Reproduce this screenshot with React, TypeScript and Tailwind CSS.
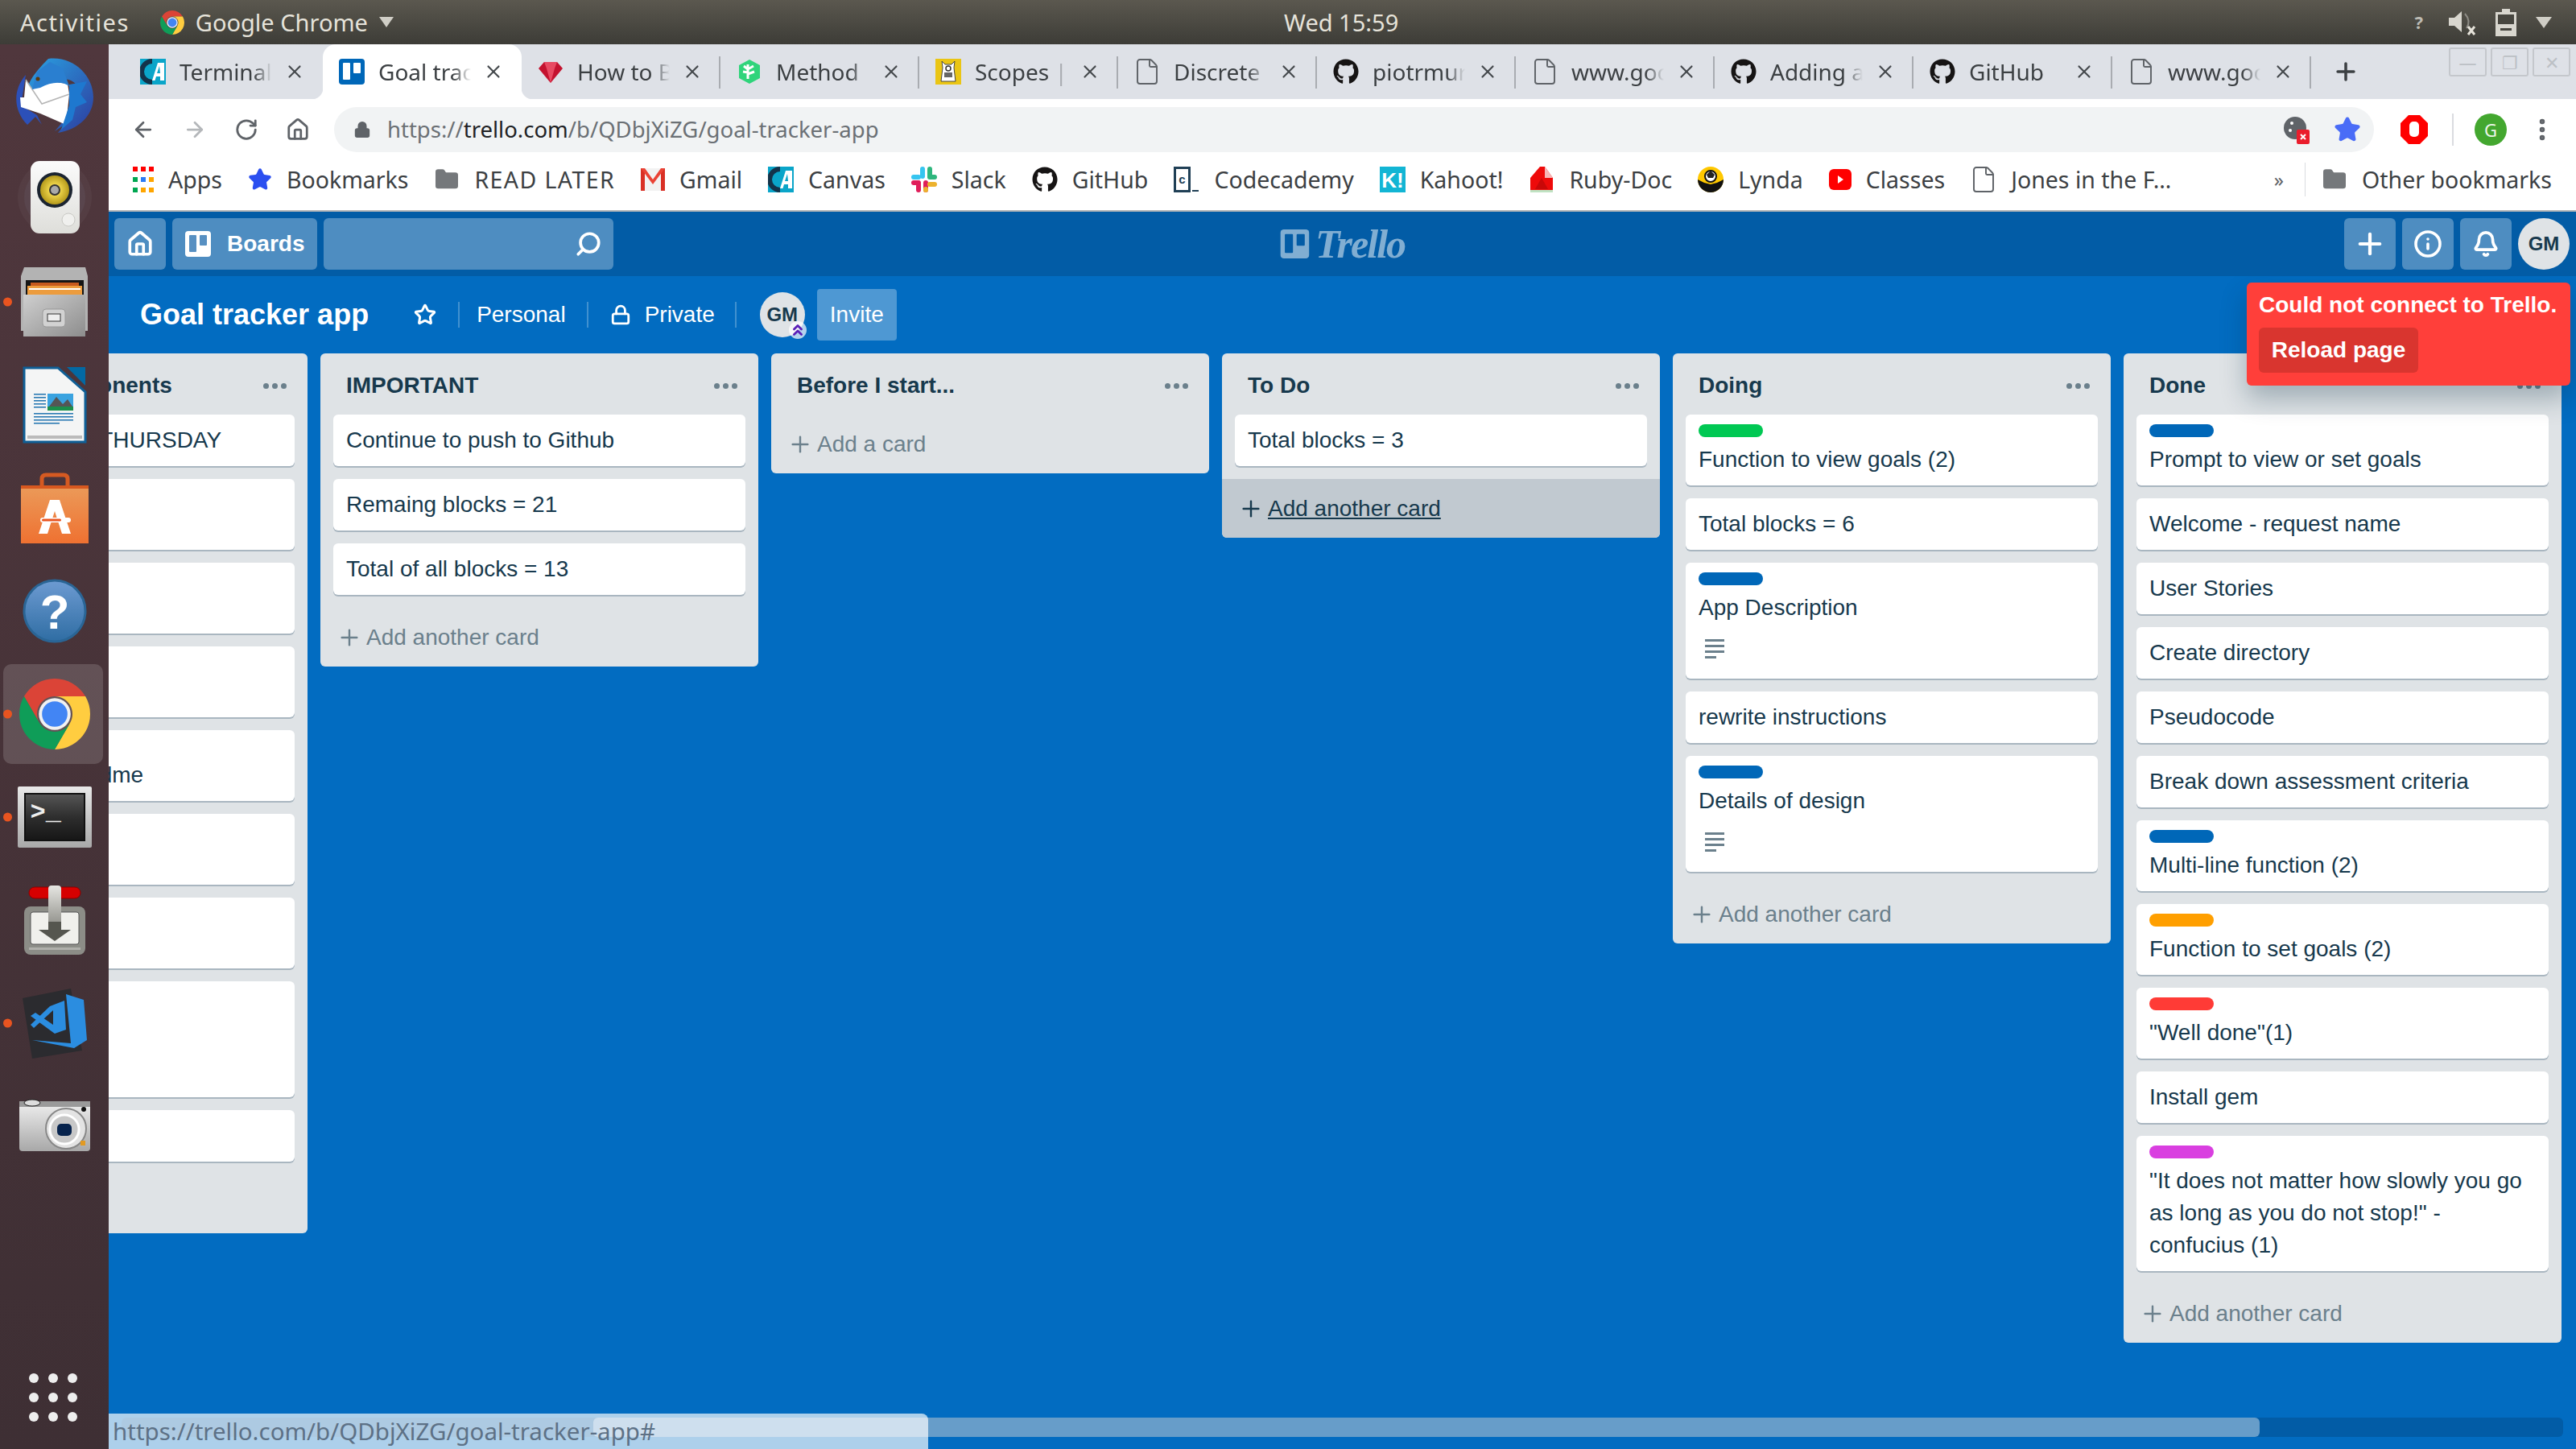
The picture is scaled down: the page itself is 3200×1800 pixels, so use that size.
import React from "react";
import { FaGithub } from "react-icons/fa";
import { Plus, Info, Bell, Search, Home, ArrowLeft, ArrowRight, RotateCw, Lock, Star, X, MoreVertical, ChevronsUp, Folder, File } from "lucide-react";

const BG = "#dee1e7";

function TrelloMark({ size = 32, bg = "#0067b8", fg = "#fff" }: { size?: number; bg?: string; fg?: string }) {
  return (
    <svg width={size} height={size} viewBox="0 0 32 32">
      <rect width="32" height="32" rx="4" fill={bg} />
      <rect x="5" y="5" width="9" height="21" rx="1" fill={fg} />
      <rect x="18" y="5" width="9" height="13" rx="1" fill={fg} />
    </svg>
  );
}

function ChromeLogo({ size = 44 }: { size?: number }) {
  return (
    <svg width={size} height={size} viewBox="4 4 40 40">
      <path fill="#db4437" d="M6.68 14A20 20 0 0 1 41.32 14H24A10 10 0 0 0 15.34 29Z" />
      <path fill="#ffcd40" d="M41.32 14A20 20 0 0 1 24 44L32.66 29A10 10 0 0 0 24 14Z" />
      <path fill="#0f9d58" d="M24 44A20 20 0 0 1 6.68 14L15.34 29A10 10 0 0 0 32.66 29Z" />
      <circle cx="24" cy="24" r="9" fill="#f1f1f1" />
      <circle cx="24" cy="24" r="7.2" fill="#4285f4" />
    </svg>
  );
}

function CanvasIcon() {
  return (
    <svg width="32" height="32" viewBox="0 0 32 32">
      <rect width="32" height="32" fill="#0aa5c9" />
      <path d="M15 3A13 13 0 1 0 15 29" fill="none" stroke="#13334a" strokeWidth="6" />
      <path d="M22 5L15 27H18.5L20 22H25V27H30V5ZM21 18L24 9L25 18Z" fill="#fff" />
    </svg>
  );
}

function GemIcon() {
  return (
    <svg width="32" height="32" viewBox="0 0 32 32">
      <path d="M8 4H24L31 12L16 30L1 12Z" fill="#c4122f" />
      <path d="M8 4L11 12H21L24 4L16 4ZM11 12L16 30L21 12Z" fill="#e84a62" />
    </svg>
  );
}

function MethodIcon() {
  return (
    <svg width="32" height="32" viewBox="0 0 32 32">
      <path d="M16 1L29 8V24L16 31L3 24V8Z" fill="#2fd47b" />
      <path d="M14 7V25M14 13L9 9M14 17L8 16M14 13L21 9M14 19L22 16" stroke="#fff" strokeWidth="3" fill="none" />
    </svg>
  );
}

function ScopesIcon() {
  return (
    <svg width="32" height="32" viewBox="0 0 32 32">
      <rect width="32" height="32" fill="#eac514" />
      <path d="M9 11L8 3L12 7H20L24 3L23 11L25 28H7Z" fill="#fff" stroke="#444" strokeWidth="1" />
      <circle cx="16" cy="12" r="3" fill="#fff" stroke="#333" strokeWidth="1.5" />
      <rect x="11" y="17" width="10" height="6" fill="#666" />
    </svg>
  );
}

function SlackIcon() {
  return (
    <svg width="32" height="32" viewBox="0 0 32 32">
      <rect x="11" y="0" width="6" height="15" rx="3" fill="#36c5f0" />
      <rect x="0" y="10" width="12" height="6" rx="3" fill="#36c5f0" />
      <rect x="20" y="0" width="6" height="15" rx="3" fill="#2eb67d" />
      <rect x="20" y="10" width="12" height="6" rx="3" fill="#2eb67d" />
      <rect x="6" y="17" width="6" height="15" rx="3" fill="#e01e5a" />
      <rect x="0" y="17" width="11" height="6" rx="3" fill="#e01e5a" />
      <rect x="15" y="17" width="6" height="15" rx="3" fill="#e01e5a" />
      <rect x="20" y="19" width="12" height="6" rx="3" fill="#ecb22e" />
      <rect x="15" y="25" width="6" height="7" rx="3" fill="#ecb22e" />
    </svg>
  );
}

function CodecademyIcon() {
  return (
    <svg width="32" height="32" viewBox="0 0 32 32">
      <rect x="1.5" y="1.5" width="18" height="29" fill="#fff" stroke="#204056" strokeWidth="3" />
      <text x="10.5" y="21" fontSize="15" fontWeight="700" fill="#204056" textAnchor="middle" fontFamily="Liberation Sans">c</text>
      <rect x="23" y="29" width="8" height="2" fill="#204056" />
    </svg>
  );
}

function KahootIcon() {
  return (
    <svg width="32" height="32" viewBox="0 0 32 32">
      <rect width="32" height="32" fill="#12b5d4" />
      <text x="16" y="26" fontSize="26" fontWeight="700" fill="#fff" textAnchor="middle" fontFamily="Liberation Sans">K!</text>
    </svg>
  );
}

function RubyDocIcon() {
  return (
    <svg width="32" height="32" viewBox="0 0 32 32">
      <path d="M14 0H20L30 14V32H2V14Z" fill="#ee0a0a" />
      <path d="M20 0L30 14H20Z" fill="#f7b7b7" />
      <path d="M2 29H30V32H2Z" fill="#bfe3c3" />
      <path d="M16 14L24 28H8Z" fill="#c90808" />
    </svg>
  );
}

function LyndaIcon() {
  return (
    <svg width="32" height="32" viewBox="0 0 32 32">
      <circle cx="16" cy="16" r="16" fill="#ffc800" />
      <path d="M0 16A16 16 0 0 0 32 16L24 20L16 22L8 20Z" fill="#111" />
      <circle cx="16" cy="12" r="7" fill="#fff" stroke="#111" strokeWidth="2" />
      <path d="M11 10L16 5L21 10L19 14H13Z" fill="#222" />
    </svg>
  );
}

function YouTubeIcon() {
  return (
    <svg width="28" height="32" viewBox="0 0 28 32" className="shrink-0">
      <rect x="0" y="3" width="28" height="26" rx="6" fill="#f00" />
      <path d="M11 11L18 16L11 21Z" fill="#fff" />
    </svg>
  );
}

function GmailIcon() {
  return (
    <svg width="30" height="28" viewBox="0 0 30 28" className="shrink-0">
      <rect width="30" height="28" fill="#f2f2f2" />
      <path d="M0 0H5V28H0ZM25 0H30V28H25Z" fill="#d93025" />
      <path d="M0 0H5L15 14L25 0H30L15 20Z" fill="#ea4335" />
    </svg>
  );
}

function AppsGrid() {
  const colors = ["#ff0000", "#ff0000", "#ff0000", "#00a651", "#2a7bf6", "#ffa500", "#00a651", "#ffa500", "#ffa500"];
  return (
    <div className="grid w-[26px] shrink-0 grid-cols-3 gap-x-[4px] gap-y-[7px]">
      {colors.map((c, i) => (
        <div key={i} className="h-[6px] w-[6px]" style={{ backgroundColor: c }} />
      ))}
    </div>
  );
}

function GreyFolder() {
  return <Folder size={32} fill="#75787b" stroke="#75787b" strokeWidth={1} className="shrink-0" />;
}

function PageIcon() {
  return <File size={36} strokeWidth={1.3} color="#5f6368" className="-mx-[2px] shrink-0" />;
}

function Octo({ size = 32 }: { size?: number }) {
  return <FaGithub size={size} color="#161414" className="shrink-0" />;
}

// Dock icons ------------------------------------------------------------
function Thunderbird() {
  return (
    <svg width="96" height="96" viewBox="0 0 96 96">
      <defs>
        <linearGradient id="tb" x1="0" y1="0" x2="1" y2="1">
          <stop offset="0" stopColor="#2aa3e3" />
          <stop offset="1" stopColor="#2d3b9e" />
        </linearGradient>
      </defs>
      <path d="M40 2C70 -2 96 22 96 50C96 72 78 90 52 94L60 84L48 92L70 66L78 40C74 28 60 24 48 30L30 38L14 42C14 30 28 14 40 2Z" fill="url(#tb)" />
      <path d="M12 22C-4 40 -4 66 14 84L24 74L32 84L26 72L6 60Z" fill="#2c50b8" />
      <path d="M12 28L20 40L42 30L64 33L66 46L62 84L30 70L6 62L5 50L10 50Z" fill="#fff" />
      <path d="M12 28L32 58L66 46" fill="none" stroke="#b4b4b4" strokeWidth="1.5" />
      <path d="M20 40L26 18L42 6L58 14L66 36C58 30 44 30 30 38Z" fill="#2a7fd0" />
      <circle cx="27" cy="27" r="2.5" fill="#5a3b10" />
      <path d="M66 34L88 30L80 46L88 56L74 62L70 78L56 90L66 60Z" fill="#1e78cf" />
    </svg>
  );
}

function Speaker() {
  return (
    <svg width="96" height="96" viewBox="0 0 96 96">
      <defs>
        <linearGradient id="spk" x1="0" y1="0" x2="0" y2="1">
          <stop offset="0" stopColor="#fbfbfb" />
          <stop offset="1" stopColor="#dededa" />
        </linearGradient>
        <radialGradient id="cone" cx="0.5" cy="0.5" r="0.5">
          <stop offset="0.3" stopColor="#f5dc50" />
          <stop offset="1" stopColor="#b59a1c" />
        </radialGradient>
      </defs>
      <circle cx="48" cy="46" r="46" fill="#fff" opacity="0.04" />
      <circle cx="48" cy="46" r="38" fill="#a8c8e8" opacity="0.06" />
      <rect x="18" y="1" width="61" height="90" rx="11" fill="url(#spk)" />
      <circle cx="48" cy="37" r="22" fill="#1b2430" />
      <circle cx="48" cy="37" r="18" fill="url(#cone)" />
      <circle cx="48" cy="37" r="7" fill="#333" />
      <circle cx="48" cy="37" r="5" fill="#aaa" />
      <circle cx="65" cy="74" r="8" fill="#f0f0ee" stroke="#c9c9c5" strokeWidth="1" />
    </svg>
  );
}

function Cabinet() {
  return (
    <svg width="88" height="88" viewBox="0 0 88 88">
      <defs>
        <linearGradient id="cab" x1="0" y1="0" x2="1" y2="1">
          <stop offset="0" stopColor="#cfcfcf" />
          <stop offset="1" stopColor="#8d8d8d" />
        </linearGradient>
      </defs>
      <path d="M6 1H82L85 12V80H2V12Z" fill="#b3b3b3" />
      <rect x="8" y="17" width="72" height="20" fill="#151515" />
      <rect x="14" y="20" width="60" height="8" fill="#c65a1e" />
      <rect x="10" y="24" width="68" height="12" fill="#ec9c3e" />
      <rect x="12" y="27" width="64" height="2" fill="#fff" />
      <rect x="5" y="35" width="77" height="52" fill="url(#cab)" />
      <rect x="29" y="53" width="28" height="22" rx="4" fill="#d2d2d2" stroke="#999" />
      <rect x="35" y="59" width="16" height="9" fill="#eee" stroke="#333" />
    </svg>
  );
}

function Writer() {
  return (
    <svg width="80" height="96" viewBox="0 0 80 96">
      <path d="M2 2H44L78 32V94H2Z" fill="#f4f5f5" stroke="#0f5f96" strokeWidth="3" />
      <path d="M55 1H78V24Z" fill="#0369a3" />
      <path d="M6 88H74" stroke="#bbb" strokeWidth="4" />
      {[34, 38, 42, 46, 50].map((y) => (
        <rect key={y} x="14" y={y} width="15" height="1.6" fill="#2c7bb4" />
      ))}
      {[58, 62, 66, 70].map((y, i) => (
        <rect key={y} x="14" y={y} width={i === 3 ? 32 : 49} height="1.6" fill="#2c7bb4" />
      ))}
      <rect x="31" y="34" width="32" height="21" fill="#3aa3e0" />
      <path d="M33 50L42 38L50 47L56 41L62 50Z" fill="#555" />
      <rect x="31" y="50" width="32" height="5" fill="#1b8f4a" />
    </svg>
  );
}

function SoftwareBag() {
  return (
    <svg width="88" height="88" viewBox="0 0 88 88">
      <defs>
        <linearGradient id="bag" x1="0" y1="0" x2="0" y2="1">
          <stop offset="0" stopColor="#eb9b5a" />
          <stop offset="1" stopColor="#ef7131" />
        </linearGradient>
      </defs>
      <path d="M28 24V8Q28 3 33 3H55Q60 3 60 8V24" fill="none" stroke="#d55a22" strokeWidth="5" />
      <path d="M2 16H86V88H2Z" fill="url(#bag)" />
      <path d="M2 16H86V20H2Z" fill="#d8581f" />
      <path d="M38 34H50L64 76H53L44 48L35 76H24Z" fill="#fff" />
      <rect x="26" y="56" width="38" height="6" rx="3" fill="#fff" />
      <rect x="28" y="57.5" width="24" height="3" rx="1.5" fill="#e95420" />
    </svg>
  );
}

function HelpIcon() {
  return (
    <svg width="80" height="80" viewBox="0 0 80 80">
      <defs>
        <linearGradient id="hlp" x1="0" y1="0" x2="0" y2="1">
          <stop offset="0" stopColor="#6d9bd2" />
          <stop offset="1" stopColor="#2f6da3" />
        </linearGradient>
      </defs>
      <circle cx="40" cy="40" r="38" fill="url(#hlp)" stroke="#2a6595" strokeWidth="3" />
      <text x="40" y="62" fontSize="60" fontWeight="700" fill="#fff" textAnchor="middle" fontFamily="Liberation Sans">?</text>
    </svg>
  );
}

function TerminalIcon() {
  return (
    <div className="flex h-[76px] w-[92px] items-center justify-center rounded-[2px] bg-gradient-to-b from-[#e8e8e8] to-[#a9a9a9]">
      <div className="h-[60px] w-[76px] border-[2px] border-[#111] bg-gradient-to-b from-[#555] via-[#2e2e2e] to-[#171717] pl-[6px] font-['Liberation_Mono',monospace] text-[32px] font-bold leading-[46px] text-[#eee]">
        &gt;_
      </div>
    </div>
  );
}

function Transmission() {
  return (
    <svg width="80" height="88" viewBox="0 0 80 88">
      <defs>
        <linearGradient id="lever" x1="0" y1="0" x2="0" y2="1">
          <stop offset="0" stopColor="#e6e6e2" />
          <stop offset="1" stopColor="#8c8c86" />
        </linearGradient>
      </defs>
      <rect x="8" y="3" width="64" height="14" rx="7" fill="#d60000" stroke="#8c0000" />
      <rect x="2" y="27" width="76" height="60" rx="8" fill="#8c8d87" />
      <rect x="10" y="34" width="60" height="40" rx="3" fill="#f0f0ec" stroke="#555" />
      <rect x="8" y="78" width="64" height="3" fill="#b0b0ab" />
      <rect x="32" y="1" width="16" height="52" rx="4" fill="url(#lever)" />
      <path d="M32 46H48V56H60L40 70L20 56H32Z" fill="#55564f" />
    </svg>
  );
}

function VSCode() {
  return (
    <svg width="84" height="88" viewBox="0 0 84 88">
      <path d="M2 13L62 1L76 78L14 88Z" fill="#2b2b2f" />
      <path d="M56 8L78 15L82 65L66 75L14 65L62 69Z" fill="#2b8de0" />
      <path d="M36 23L54 16L56 52L42 57L12 35L18 31L40 46L40 28L16 50L12 46Z" fill="#2b8de0" />
    </svg>
  );
}

function Camera() {
  return (
    <svg width="88" height="68" viewBox="0 0 88 68">
      <defs>
        <linearGradient id="cam" x1="0" y1="0" x2="0" y2="1">
          <stop offset="0" stopColor="#f0f0f0" />
          <stop offset="1" stopColor="#a8a8a8" />
        </linearGradient>
      </defs>
      <rect x="0" y="3" width="88" height="62" rx="4" fill="url(#cam)" />
      <rect x="0" y="3" width="88" height="7" fill="#9a9a9a" />
      <ellipse cx="16" cy="5" rx="10" ry="4" fill="#ddd" stroke="#222" />
      <circle cx="58" cy="37" r="25" fill="#e3e3e3" stroke="#888" strokeWidth="2" />
      <circle cx="56" cy="38" r="18" fill="#c8c8c8" stroke="#fff" strokeWidth="3" />
      <rect x="47" y="31" width="18" height="15" rx="5" fill="#07234d" />
      <circle cx="80" cy="13" r="3" fill="#111" />
      <rect x="76" y="52" width="6" height="6" fill="#e29a22" />
    </svg>
  );
}

function Dock() {
  const tiles: { el: React.ReactNode; running?: boolean; active?: boolean }[] = [
    { el: <Thunderbird /> },
    { el: <Speaker /> },
    { el: <Cabinet />, running: true },
    { el: <Writer /> },
    { el: <SoftwareBag /> },
    { el: <HelpIcon /> },
    { el: <ChromeLogo size={88} />, running: true, active: true },
    { el: <TerminalIcon />, running: true },
    { el: <Transmission /> },
    { el: <VSCode />, running: true },
    { el: <Camera /> },
  ];
  return (
    <aside className="relative z-20 flex w-[135px] shrink-0 flex-col bg-gradient-to-b from-[#50373d] to-[#3e2f34]">
      {tiles.map((t, i) => (
        <div key={i} className="relative flex h-[128px] shrink-0 items-center justify-center">
          {t.active && <div className="absolute bottom-[2px] left-[4px] right-[7px] top-[2px] rounded-[10px] bg-white/15" />}
          {t.running && <div className="absolute left-[4px] top-1/2 h-[11px] w-[11px] -translate-y-1/2 rounded-full bg-[#e95420]" />}
          <div className="relative">{t.el}</div>
        </div>
      ))}
      <div className="mb-[34px] ml-[36px] mt-auto grid w-[72px] grid-cols-3 gap-y-[12px]">
        {Array.from({ length: 9 }).map((_, i) => (
          <div key={i} className="h-[12px] w-[12px] rounded-full bg-[#eeeeee]" />
        ))}
      </div>
    </aside>
  );
}

// Browser chrome --------------------------------------------------------
const tabs: { title: string; icon: React.ReactNode; active?: boolean; noSep?: boolean }[] = [
  { title: "Terminal - Canvas", icon: <CanvasIcon />, noSep: true },
  { title: "Goal tracker app", icon: <TrelloMark />, active: true, noSep: true },
  { title: "How to Build", icon: <GemIcon /> },
  { title: "Method | Ruby", icon: <MethodIcon /> },
  { title: "Scopes | Ruby", icon: <ScopesIcon /> },
  { title: "Discrete maths", icon: <PageIcon /> },
  { title: "piotrmurach", icon: <Octo /> },
  { title: "www.google", icon: <PageIcon /> },
  { title: "Adding a file", icon: <Octo /> },
  { title: "GitHub", icon: <Octo /> },
  { title: "www.google", icon: <PageIcon /> },
];

function TabStrip() {
  return (
    <div className="flex h-[68px] shrink-0 items-stretch pl-[19px]" style={{ backgroundColor: BG }}>
      {tabs.map((t, i) => (
        <div key={i} className={`relative flex w-[247px] shrink-0 items-center pl-[20px] pr-[22px] ${t.active ? "rounded-t-[16px] bg-white" : ""}`}>
          {t.active && (
            <>
              <div className="absolute bottom-0 left-[-14px] h-[14px] w-[14px] bg-[radial-gradient(circle_at_0_0,#dee1e7_14px,#ffffff_15px)]" />
              <div className="absolute bottom-0 right-[-14px] h-[14px] w-[14px] bg-[radial-gradient(circle_at_100%_0,#dee1e7_14px,#ffffff_15px)]" />
            </>
          )}
          <div className="flex w-[32px] shrink-0 justify-center">{t.icon}</div>
          <div className="ml-[17px] flex-1 overflow-hidden whitespace-nowrap text-[28px] leading-[38px] text-[#3c4043] [mask-image:linear-gradient(to_right,black_80%,transparent)]">
            {t.title}
          </div>
          <X size={26} strokeWidth={2} color="#45494d" className="ml-[15px] shrink-0" />
          {!t.noSep && <div className="absolute right-0 top-[15px] h-[40px] w-[2px] bg-[#a9acb1]" />}
        </div>
      ))}
      <div className="flex w-[86px] items-center justify-center">
        <Plus size={34} strokeWidth={2.5} color="#3c4043" />
      </div>
      <div className="ml-auto mr-[7px] mt-[4px] flex gap-[5px]">
        {["—", "❐", "✕"].map((g) => (
          <div key={g} className="flex h-[36px] w-[47px] items-center justify-center rounded-[3px] border-[2px] border-[#c4c7cc] text-[22px] leading-none text-[#bcc0c5]">
            {g}
          </div>
        ))}
      </div>
    </div>
  );
}

function Toolbar() {
  return (
    <div className="flex h-[72px] shrink-0 items-start bg-white pt-[10px]">
      <div className="flex h-[56px] w-[280px] shrink-0 items-center gap-[34px] pl-[28px]">
        <ArrowLeft size={30} strokeWidth={2.2} color="#5f6368" />
        <ArrowRight size={30} strokeWidth={2.2} color="#b4b7ba" />
        <RotateCw size={30} strokeWidth={2.2} color="#5f6368" />
        <Home size={30} strokeWidth={2.2} color="#5f6368" />
      </div>
      <div className="flex h-[56px] w-[2534px] shrink-0 items-center rounded-full bg-[#f1f3f4] pl-[24px] pr-[16px]">
        <Lock size={22} fill="#5f6368" color="#5f6368" />
        <div className="ml-[20px] text-[27.5px] text-[#6b7075]">
          https://<span className="text-[#202124]">trello.com</span>/b/QDbjXiZG/goal-tracker-app
        </div>
        <svg className="ml-auto mr-[30px]" width="32" height="36" viewBox="0 0 32 36">
          <circle cx="14" cy="16" r="14" fill="#5f6368" />
          <circle cx="10" cy="10" r="2" fill="#fff" />
          <circle cx="8" cy="19" r="2" fill="#fff" />
          <rect x="16" y="18" width="16" height="18" rx="2" fill="#ea1d2c" />
          <path d="M21 24L27 30M27 24L21 30" stroke="#fff" strokeWidth="2" />
        </svg>
        <Star size={34} fill="#4a6cf7" color="#4a6cf7" />
      </div>
      <div className="flex h-[56px] flex-1 items-center">
        <svg className="ml-[33px]" width="34" height="36" viewBox="0 0 34 36">
          <path d="M10 0H24L34 10V26L24 36H10L0 26V10Z" fill="#f00" />
          <rect x="11" y="8" width="12" height="19" rx="5" fill="#fff" />
        </svg>
        <div className="ml-[30px] h-[40px] w-[2px] bg-[#dadce0]" />
        <div className="ml-[26px] flex h-[40px] w-[40px] items-center justify-center rounded-full bg-[#43a72f] text-[22px] text-white/90">G</div>
        <MoreVertical size={34} strokeWidth={2.6} color="#5f6368" className="ml-[27px]" />
      </div>
    </div>
  );
}

function Mark({ icon, text, wide }: { icon: React.ReactNode; text: string; wide?: boolean }) {
  return (
    <div className="flex shrink-0 items-center gap-[18px]">
      {icon}
      <span className={`text-[28.5px] leading-[38px] text-[#3c4043] ${wide ? "tracking-[1.4px]" : ""}`}>{text}</span>
    </div>
  );
}

function BookmarksBar() {
  return (
    <div className="flex h-[68px] shrink-0 items-center border-b-[2px] border-[#b3b5b8] bg-white pb-[10px] pl-[30px]">
      <div className="flex items-center gap-[32px]">
        <Mark icon={<AppsGrid />} text="Apps" />
        <Mark icon={<Star size={30} fill="#2b4ff0" color="#2b4ff0" className="shrink-0" />} text="Bookmarks" />
        <Mark icon={<GreyFolder />} text="READ LATER" wide />
        <Mark icon={<GmailIcon />} text="Gmail" />
        <Mark icon={<CanvasIcon />} text="Canvas" />
        <Mark icon={<SlackIcon />} text="Slack" />
        <Mark icon={<Octo />} text="GitHub" />
        <Mark icon={<CodecademyIcon />} text="Codecademy" />
        <Mark icon={<KahootIcon />} text="Kahoot!" />
        <Mark icon={<RubyDocIcon />} text="Ruby-Doc" />
        <Mark icon={<LyndaIcon />} text="Lynda" />
        <Mark icon={<YouTubeIcon />} text="Classes" />
        <Mark icon={<PageIcon />} text="Jones in the F…" />
      </div>
      <div className="ml-auto flex items-center">
        <span className="text-[24px] text-[#5f6368]">»</span>
        <div className="ml-[26px] mr-[20px] h-[42px] w-[1px] bg-[#dadce0]" />
        <div className="mr-[30px]">
          <Mark icon={<GreyFolder />} text="Other bookmarks" />
        </div>
      </div>
    </div>
  );
}

// Trello ----------------------------------------------------------------
function HeaderBtn({ children }: { children: React.ReactNode }) {
  return <div className="flex h-[64px] w-[64px] items-center justify-center rounded-[6px] bg-white/30">{children}</div>;
}

function TrelloHeader() {
  return (
    <div className="relative flex h-[80px] shrink-0 items-center bg-[#025ca6] pl-[7px] pr-[8px] font-['Liberation_Sans',sans-serif]">
      <HeaderBtn>
        <Home size={34} strokeWidth={2.6} color="#fff" />
      </HeaderBtn>
      <div className="ml-[8px] flex h-[64px] w-[180px] items-center gap-[20px] rounded-[6px] bg-white/30 pl-[16px]">
        <TrelloMark size={32} bg="#fff" fg="#5790c2" />
        <span className="text-[28px] font-bold text-white">Boards</span>
      </div>
      <div className="ml-[8px] flex h-[64px] w-[360px] items-center justify-end rounded-[6px] bg-white/30 pr-[14px]">
        <Search size={34} strokeWidth={2.6} color="#fff" className="-scale-x-100" />
      </div>
      <div className="absolute left-1/2 top-[21px] flex -translate-x-1/2 items-center gap-[8px] opacity-50">
        <TrelloMark size={36} bg="#fff" fg="#025ca6" />
        <span className="font-['Liberation_Serif',serif] text-[50px] font-bold italic leading-[38px] tracking-[-2px] text-white">Trello</span>
      </div>
      <div className="ml-auto flex items-center gap-[8px]">
        <HeaderBtn>
          <Plus size={42} strokeWidth={2.4} color="#fff" />
        </HeaderBtn>
        <HeaderBtn>
          <Info size={36} strokeWidth={2.4} color="#fff" />
        </HeaderBtn>
        <HeaderBtn>
          <Bell size={34} strokeWidth={2.6} color="#fff" />
        </HeaderBtn>
        <div className="flex h-[64px] w-[64px] items-center justify-center rounded-full bg-[#dfe3e6] text-[24px] font-bold text-[#17394d]">GM</div>
      </div>
    </div>
  );
}

function BarSep() {
  return <div className="h-[32px] w-[2px] bg-white/25" />;
}

function BoardBar() {
  return (
    <div className="flex h-[96px] shrink-0 items-center pl-[39px] text-white">
      <h1 className="text-[36px] font-bold leading-[48px]">Goal tracker app</h1>
      <Star size={28} strokeWidth={2.6} className="ml-[56px]" />
      <div className="ml-[27px]"><BarSep /></div>
      <span className="ml-[21px] text-[28px]">Personal</span>
      <div className="ml-[26px]"><BarSep /></div>
      <Lock size={26} strokeWidth={2.6} className="ml-[27px]" />
      <span className="ml-[17px] text-[28px]">Private</span>
      <div className="ml-[25px]"><BarSep /></div>
      <div className="relative ml-[29px] flex h-[56px] w-[56px] items-center justify-center rounded-full bg-[#dfe3e6] text-[24px] font-bold text-[#17394d]">
        GM
        <ChevronsUp size={22} strokeWidth={3} color="#5a1fb8" className="absolute -bottom-[2px] -right-[2px] rounded-full bg-white/70" />
      </div>
      <div className="ml-[15px] flex h-[64px] w-[99px] items-center justify-center rounded-[4px] bg-white/30 text-[28px]">Invite</div>
    </div>
  );
}

type CardData = { text?: string; label?: string; desc?: boolean };

function DescIcon() {
  return (
    <div className="flex h-[32px] w-[24px] flex-col justify-center gap-[4px]">
      <div className="h-[3px] w-[24px] bg-[#6b808c]" />
      <div className="h-[3px] w-[24px] bg-[#6b808c]" />
      <div className="h-[3px] w-[24px] bg-[#6b808c]" />
      <div className="h-[3px] w-[14px] bg-[#6b808c]" />
    </div>
  );
}

function Card({ text, label, desc }: CardData) {
  return (
    <div className="rounded-[6px] bg-white px-[16px] py-[12px] text-[28px] leading-[40px] text-[#17394d] shadow-[0_2px_0_#a9b6c0]">
      {label && <div className="mb-[8px] h-[16px] w-[80px] rounded-full" style={{ backgroundColor: label }} />}
      <div className="min-h-[40px] whitespace-pre-line">{text}</div>
      {desc && (
        <div className="flex h-[56px] items-center pl-[8px] pt-[6px]">
          <DescIcon />
        </div>
      )}
    </div>
  );
}

const BLUE = "#0067b8";

const lists: { title: string; cards: CardData[]; add?: string; hover?: boolean }[] = [
  {
    title: "Assessment Components",
    cards: [
      { text: "Assessment due on THURSDAY" },
      { label: BLUE },
      { label: BLUE },
      { label: BLUE },
      { label: BLUE, text: "Complete a tidy Readme" },
      { label: BLUE },
      { label: BLUE },
      { label: BLUE, desc: true },
      {},
    ],
    add: "",
  },
  {
    title: "IMPORTANT",
    cards: [{ text: "Continue to push to Github" }, { text: "Remaing blocks = 21" }, { text: "Total of all blocks = 13" }],
  },
  { title: "Before I start...", cards: [], add: "Add a card" },
  { title: "To Do", cards: [{ text: "Total blocks = 3" }], hover: true },
  {
    title: "Doing",
    cards: [
      { label: "#00c853", text: "Function to view goals (2)" },
      { text: "Total blocks = 6" },
      { label: BLUE, text: "App Description", desc: true },
      { text: "rewrite instructions" },
      { label: BLUE, text: "Details of design", desc: true },
    ],
  },
  {
    title: "Done",
    cards: [
      { label: BLUE, text: "Prompt to view or set goals" },
      { text: "Welcome - request name" },
      { text: "User Stories" },
      { text: "Create directory" },
      { text: "Pseudocode" },
      { text: "Break down assessment criteria" },
      { label: BLUE, text: "Multi-line function (2)" },
      { label: "#ff9f00", text: "Function to set goals (2)" },
      { label: "#ff3b36", text: '"Well done"(1)' },
      { text: "Install gem" },
      { label: "#d93fe0", text: '"It does not matter how slowly you go as long as you do not stop!" - confucius (1)' },
    ],
  },
];

function BoardList({ title, cards, add = "Add another card", hover }: (typeof lists)[number]) {
  return (
    <section className="flex w-[544px] shrink-0 flex-col rounded-[6px] bg-[#dfe3e6]">
      <div className="flex h-[76px] shrink-0 items-center justify-between pl-[32px] pr-[26px] pt-[4px]">
        <h2 className="whitespace-nowrap text-[28px] font-bold text-[#17394d]">{title}</h2>
        <div className="flex gap-[4px]">
          <div className="h-[7px] w-[7px] rounded-full bg-[#6b808c]" />
          <div className="h-[7px] w-[7px] rounded-full bg-[#6b808c]" />
          <div className="h-[7px] w-[7px] rounded-full bg-[#6b808c]" />
        </div>
      </div>
      <div className="flex flex-col gap-[16px] px-[16px]">
        {cards.map((c, i) => (
          <Card key={i} {...c} />
        ))}
      </div>
      <div
        className={`flex h-[73px] items-center gap-[5px] rounded-b-[6px] pl-[20px] text-[28px] ${cards.length ? "mt-[16px]" : ""} ${
          hover ? "bg-[#c1c9d0] text-[#17394d]" : "text-[#6b808c]"
        }`}
      >
        {add && <Plus size={32} strokeWidth={1.8} />}
        <span className={hover ? "underline" : ""}>{add}</span>
      </div>
    </section>
  );
}

function Board() {
  return (
    <main className="relative flex min-w-0 flex-1 flex-col overflow-hidden bg-[#026cc1] font-['Liberation_Sans',sans-serif]">
      <BoardBar />
      <div className="ml-[-297px] flex min-h-0 flex-1 items-start gap-[16px]">
        {lists.map((l) => (
          <BoardList key={l.title} {...l} />
        ))}
      </div>
      <div className="mb-[15px] ml-[16px] mr-[16px] h-[24px] shrink-0 rounded-[6px] bg-[#025ca6] pl-[586px] pr-[377px]">
        <div className="h-full rounded-[6px] bg-white/40" />
      </div>
      {/* could-not-connect toast */}
      <div className="absolute right-[7px] top-[8px] h-[128px] w-[402px] rounded-[6px] bg-[#ff3f3a] px-[15px] pt-[10px] text-white shadow-[0_16px_32px_rgba(9,45,66,0.3)]">
        <div className="whitespace-nowrap text-[28px] font-bold leading-[36px]">Could not connect to Trello.</div>
        <div className="mt-[10px] flex h-[56px] w-[198px] items-center justify-center rounded-[6px] bg-[#d9352f] text-[28px] font-bold">Reload page</div>
      </div>
      {/* link status bubble */}
      <div className="absolute bottom-0 left-0 flex h-[44px] w-[1018px] items-center rounded-tr-[8px] bg-white/[0.68] pl-[5px] font-['Noto_Sans',sans-serif] text-[29.5px] text-[#5d7186]">
        https://trello.com/b/QDbjXiZG/goal-tracker-app#
      </div>
    </main>
  );
}

function TopBar() {
  return (
    <header className="flex h-[55px] shrink-0 items-center bg-gradient-to-b from-[#5b584f] to-[#3d3c37] pl-[25px] pr-[30px] text-[29px] text-[#e6e3da]">
      <span className="tracking-[1.5px]">Activities</span>
      <div className="ml-[38px] flex items-center gap-[14px]">
        <ChromeLogo size={30} />
        <span>Google Chrome</span>
        <div className="h-0 w-0 border-x-[9px] border-t-[13px] border-x-transparent border-t-[#d0cec6]" />
      </div>
      <span className="absolute left-1/2 -translate-x-[5px]">Wed 15:59</span>
      <div className="ml-auto flex items-center gap-[24px]">
        <span className="mr-[8px] text-[22px] font-bold text-[#bdbbb3]">?</span>
        <svg width="34" height="34" viewBox="0 0 34 34">
          <path d="M0 11H7L16 3V29L7 21H0Z" fill="#d8d6ce" />
          <path d="M20 6Q28 15 22 24" fill="none" stroke="#8e8c85" strokeWidth="2" />
          <path d="M24 22L32 32M32 22L24 32" stroke="#e6e3da" strokeWidth="3" />
        </svg>
        <svg width="26" height="34" viewBox="0 0 26 34">
          <path d="M8 0H18V4H26V34H0V4H8Z" fill="#d8d6ce" />
          <rect x="3" y="7" width="20" height="12" fill="#47463f" />
          <rect x="6" y="24" width="14" height="3" fill="#47463f" />
        </svg>
        <div className="h-0 w-0 border-x-[10px] border-t-[14px] border-x-transparent border-t-[#d0cec6]" />
      </div>
    </header>
  );
}

export default function App() {
  return (
    <div className="flex h-[1800px] w-[3200px] flex-col overflow-hidden font-['Noto_Sans',sans-serif]">
      <TopBar />
      <div className="flex min-h-0 flex-1">
        <Dock />
        <div className="flex min-w-0 flex-1 flex-col">
          <TabStrip />
          <Toolbar />
          <BookmarksBar />
          <TrelloHeader />
          <Board />
        </div>
      </div>
    </div>
  );
}
